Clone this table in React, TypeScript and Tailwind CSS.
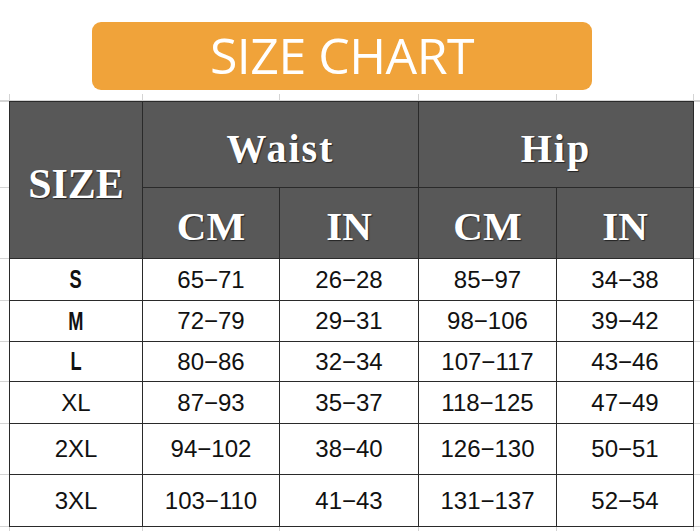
import React from "react";

const rows: string[][] = [
  ["S", "65−71", "26−28", "85−97", "34−38"],
  ["M", "72−79", "29−31", "98−106", "39−42"],
  ["L", "80−86", "32−34", "107−117", "43−46"],
  ["XL", "87−93", "35−37", "118−125", "47−49"],
  ["2XL", "94−102", "38−40", "126−130", "50−51"],
  ["3XL", "103−110", "41−43", "131−137", "52−54"],
];

const serif = "font-['Liberation_Serif','Times_New_Roman',serif] font-bold text-white [text-shadow:1px_1px_1px_rgba(0,0,0,0.6)]";
const cellHead = "bg-[#585858] flex items-center justify-center";
const cellData = "bg-white flex items-center justify-center text-[24px] text-[#111] font-['Liberation_Sans',Arial,sans-serif]";

export default function App() {
  const hLines = [101, 187, 258, 300, 341, 381, 423, 474, 526];
  const vLines = [9, 142, 279, 418, 556, 693];
  return (
    <div className="relative w-[700px] h-[531px] bg-white overflow-hidden">
      {/* faint spreadsheet grid marks */}
      {hLines.map((y) => (
        <React.Fragment key={"h" + y}>
          <div className="absolute left-0 w-[9px] h-px bg-[#d4d4d4]" style={{ top: y }} />
          <div className="absolute right-0 w-[6px] h-px bg-[#d4d4d4]" style={{ top: y }} />
        </React.Fragment>
      ))}
      <div className="absolute left-0 right-0 top-[100px] h-px bg-[#d4d4d4]" />
      {vLines.map((x) => (
        <React.Fragment key={"v" + x}>
          <div className="absolute top-[94px] h-[7px] w-px bg-[#d4d4d4]" style={{ left: x }} />
          <div className="absolute bottom-0 h-[5px] w-px bg-[#d4d4d4]" style={{ left: x }} />
        </React.Fragment>
      ))}

      <div className="relative pt-[22px]">
        <div className="ml-[92px] w-[500px] h-[68px] rounded-[9px] bg-[#f0a33a] flex items-center justify-center">
          <span className="text-white text-[50px] leading-none font-['Open_Sans','Noto_Sans',sans-serif] tracking-[-0.5px] pb-[2px]">
            SIZE CHART
          </span>
        </div>

        <div className="mt-[11px] ml-[9px] w-fit grid grid-cols-[132px_136px_138px_137px_136px] grid-rows-[85px_70px_41px_40px_39px_41px_50px_51px] gap-px p-px bg-[#2a2a2a]">
          <div className={`${cellHead} row-span-2`}>
            <span className={`${serif} text-[42px] leading-none pt-[8px]`}>SIZE</span>
          </div>
          <div className={`${cellHead} col-span-2`}>
            <span className={`${serif} text-[40px] leading-none tracking-[2px] pt-[8px]`}>Waist</span>
          </div>
          <div className={`${cellHead} col-span-2`}>
            <span className={`${serif} text-[40px] leading-none tracking-[2px] pt-[8px]`}>Hip</span>
          </div>
          {["CM", "IN", "CM", "IN"].map((t, i) => (
            <div key={i} className={cellHead}>
              <span className={`${serif} text-[41px] leading-none pt-[6px]`}>{t}</span>
            </div>
          ))}
          {rows.map((r, ri) =>
            r.map((c, ci) => (
              <div key={ri + "-" + ci} className={cellData}>
                {ci === 0 && ri < 3 ? (
                  <span className="inline-block font-semibold text-[26px] scale-x-[0.7]">{c}</span>
                ) : (
                  c
                )}
              </div>
            ))
          )}
        </div>
      </div>
    </div>
  );
}
